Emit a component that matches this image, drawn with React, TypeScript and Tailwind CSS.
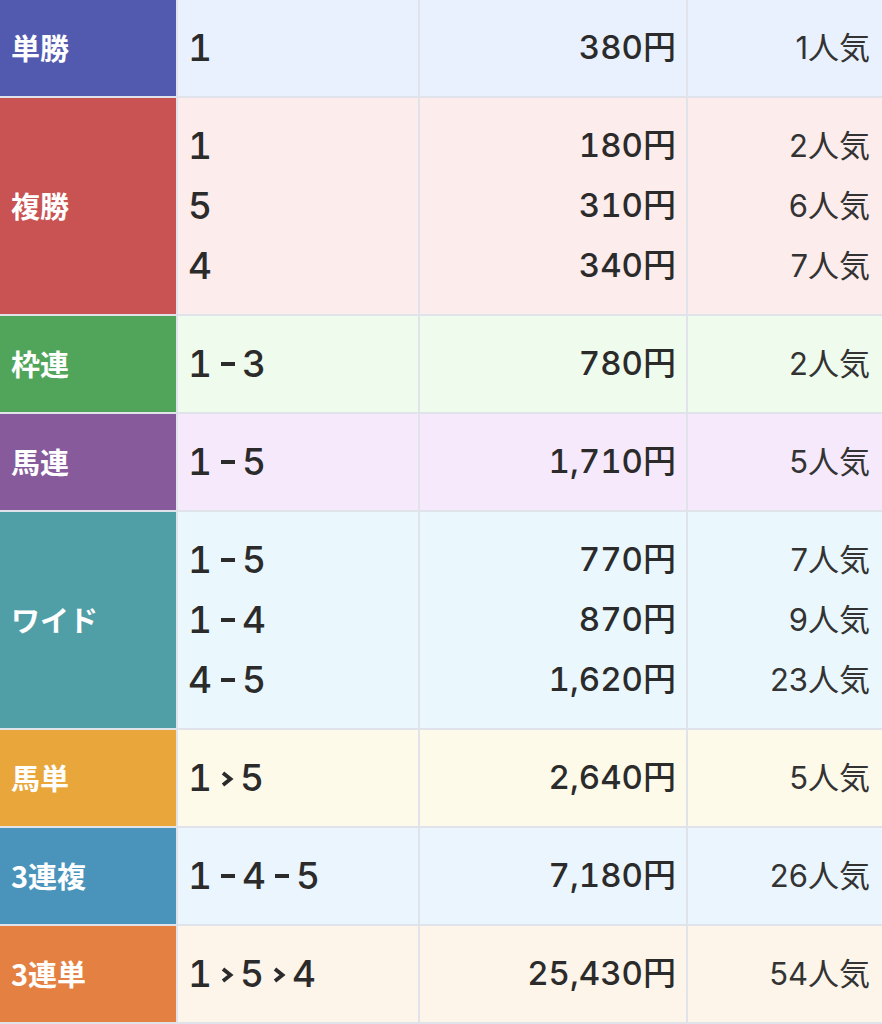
import React from "react";

type Row = {
  label: string;
  labelBg: string;
  cellBg: string;
  lines: { combo: string; pay: string; pop: string }[];
};

const rows: Row[] = [
  { label: "単勝", labelBg: "bg-[#525ab0]", cellBg: "bg-[#eaf1fe]", lines: [{ combo: "1", pay: "380円", pop: "1人気" }] },
  {
    label: "複勝",
    labelBg: "bg-[#c95252]",
    cellBg: "bg-[#fdecec]",
    lines: [
      { combo: "1", pay: "180円", pop: "2人気" },
      { combo: "5", pay: "310円", pop: "6人気" },
      { combo: "4", pay: "340円", pop: "7人気" },
    ],
  },
  { label: "枠連", labelBg: "bg-[#50a55a]", cellBg: "bg-[#effbec]", lines: [{ combo: "1-3", pay: "780円", pop: "2人気" }] },
  { label: "馬連", labelBg: "bg-[#865a9b]", cellBg: "bg-[#f6e9fc]", lines: [{ combo: "1-5", pay: "1,710円", pop: "5人気" }] },
  {
    label: "ワイド",
    labelBg: "bg-[#509ea6]",
    cellBg: "bg-[#eaf8fd]",
    lines: [
      { combo: "1-5", pay: "770円", pop: "7人気" },
      { combo: "1-4", pay: "870円", pop: "9人気" },
      { combo: "4-5", pay: "1,620円", pop: "23人気" },
    ],
  },
  { label: "馬単", labelBg: "bg-[#e8a63b]", cellBg: "bg-[#fefaea]", lines: [{ combo: "1›5", pay: "2,640円", pop: "5人気" }] },
  { label: "3連複", labelBg: "bg-[#4a94bc]", cellBg: "bg-[#eaf5fd]", lines: [{ combo: "1-4-5", pay: "7,180円", pop: "26人気" }] },
  { label: "3連単", labelBg: "bg-[#e48142]", cellBg: "bg-[#fdf5ea]", lines: [{ combo: "1›5›4", pay: "25,430円", pop: "54人気" }] },
];

function Combo({ text }: { text: string }) {
  const parts = text.split("");
  return (
    <span className="inline-flex items-center">
      {parts.map((c, i) => {
        if (c === "-")
          return <span key={i} className="ml-[9px] mr-[7px] inline-block h-[4px] w-[14px] bg-[#2b2b2b]" />;
        if (c === "›")
          return (
            <svg key={i} width="14" height="18" viewBox="0 0 14 18" className="ml-[8px] mr-[6px] translate-y-[1px]">
              <path d="M3 3 L10.5 9 L3 15" fill="none" stroke="#2b2b2b" strokeWidth="3.8" strokeLinejoin="miter" />
            </svg>
          );
        return <span key={i}>{c}</span>;
      })}
    </span>
  );
}

export default function App() {
  const font = { fontFamily: 'Inter, "Noto Sans CJK JP", sans-serif' };
  return (
    <div className="w-[882px] bg-[#e1e3ea] flex flex-col gap-[2px] pb-[2px]" style={font}>
      {rows.map((r, idx) => (
        <div key={idx} className="grid grid-cols-[176px_240px_266px_194px] gap-x-[2px]">
          <div
            className={`${r.labelBg} flex items-center pl-[11px] text-white text-[29px] font-bold`}
            style={{ fontFamily: '"Noto Sans CJK JP", sans-serif' }}
          >
            {r.label}
          </div>
          <div className={`${r.cellBg} flex flex-col justify-center py-[18px] pl-[10px] text-[37px] font-medium text-[#2b2b2b]`}>
            {r.lines.map((l, i) => (
              <div key={i} className="h-[60px] flex items-center tabular-nums">
                <Combo text={l.combo} />
              </div>
            ))}
          </div>
          <div className={`${r.cellBg} flex flex-col justify-center py-[18px] pr-[10px] text-[33px] font-medium text-[#2b2b2b]`}>
            {r.lines.map((l, i) => (
              <div key={i} className="h-[60px] flex items-center justify-end tabular-nums">
                {l.pay}
              </div>
            ))}
          </div>
          <div className={`${r.cellBg} flex flex-col justify-center py-[18px] pr-[12px] text-[31px] font-normal text-[#333]`}>
            {r.lines.map((l, i) => (
              <div key={i} className="h-[60px] flex items-center justify-end">
                {l.pop}
              </div>
            ))}
          </div>
        </div>
      ))}
    </div>
  );
}
